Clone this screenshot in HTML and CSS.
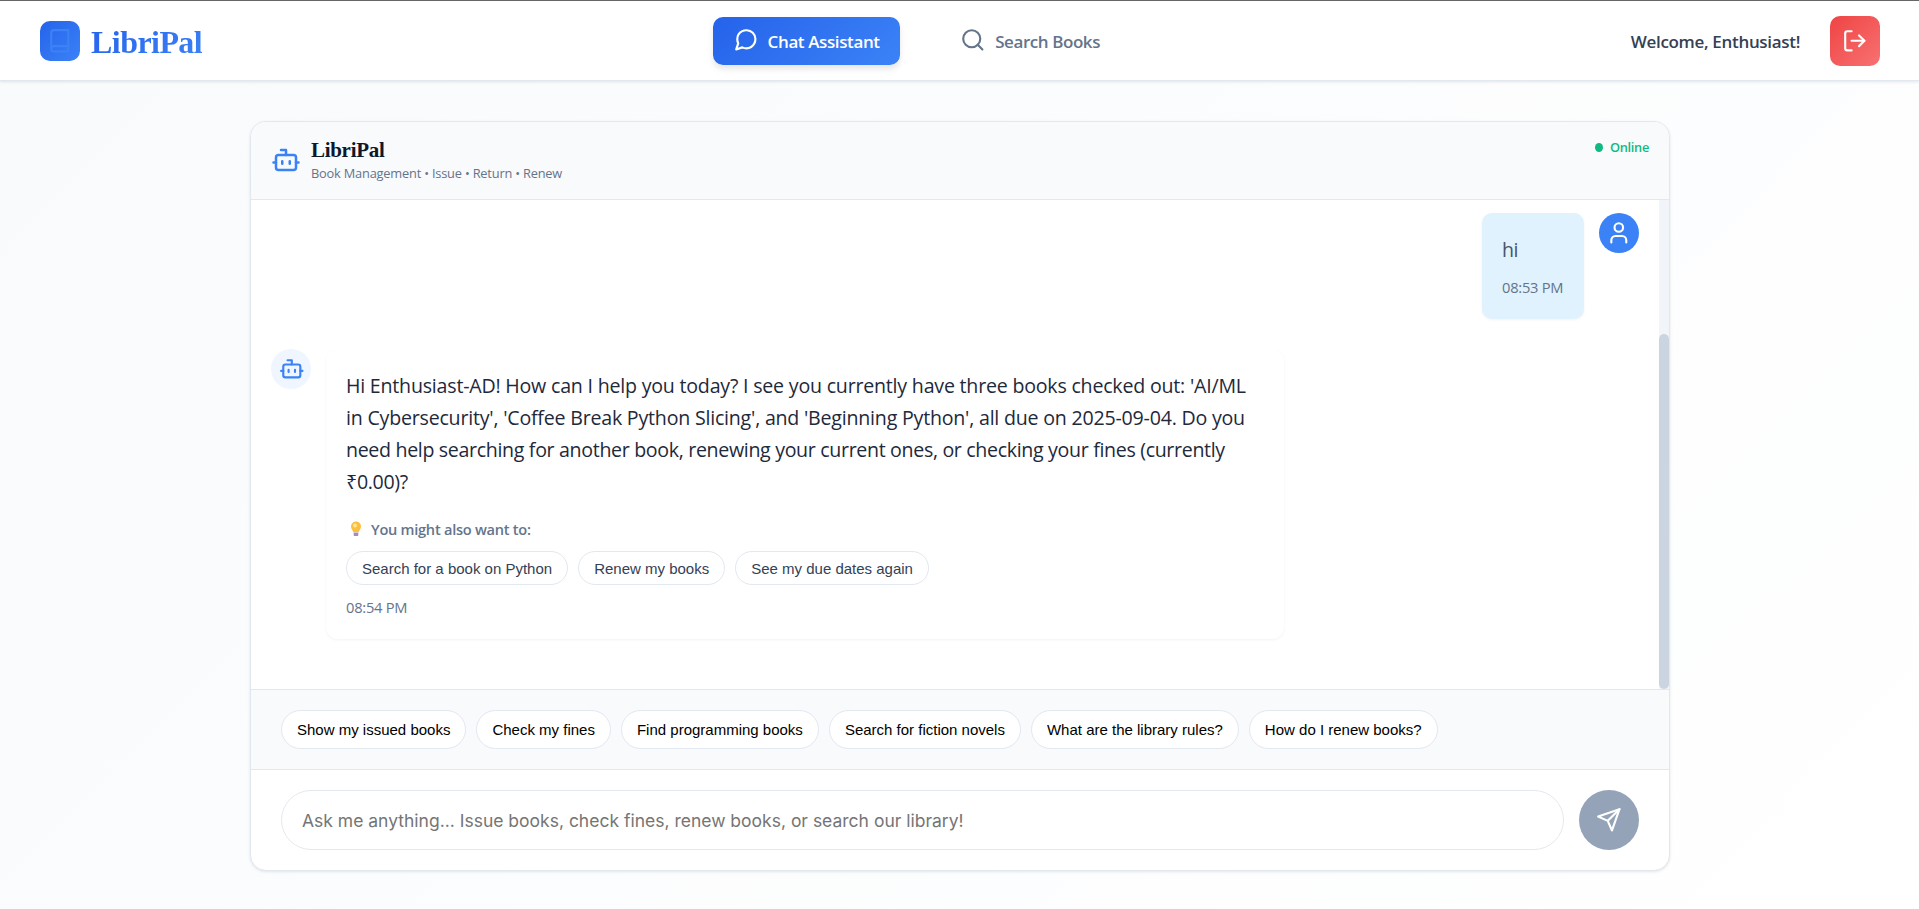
FILE: index.html
```html
<!DOCTYPE html>
<html lang="en">
<head>
<meta charset="utf-8">
<title>LibriPal</title>
<link rel="stylesheet" href="styles.css">
</head>
<body>
<header class="navbar">
  <div class="brand">
    <span class="brand-mark">
      <svg class="icon" viewBox="0 0 24 24"><path d="M4 19.500v-15A2.500 2.500 0 0 1 6.500 2H20v20H6.500a2.500 2.500 0 0 1 0-5H20"/></svg>
    </span>
    <span class="brand-name">LibriPal</span>
  </div>
  <nav class="tabs">
    <a class="tab tab-active">
      <svg class="icon" viewBox="0 0 24 24"><path d="M21 11.500a8.380 8.380 0 0 1-.9 3.800 8.500 8.500 0 0 1-7.600 4.700 8.380 8.380 0 0 1-3.800-.9L3 21l1.900-5.700a8.380 8.380 0 0 1-.9-3.800 8.500 8.500 0 0 1 4.700-7.600 8.380 8.380 0 0 1 3.800-.9h.5a8.480 8.480 0 0 1 8 8v.5z"/></svg>
      <span>Chat Assistant</span>
    </a>
    <a class="tab">
      <svg class="icon" viewBox="0 0 24 24"><circle cx="11" cy="11" r="8"/><path d="m21 21-4.350-4.350"/></svg>
      <span>Search Books</span>
    </a>
  </nav>
  <div class="account">
    <span class="welcome">Welcome, Enthusiast!</span>
    <button class="logout" aria-label="Log out">
      <svg class="icon" viewBox="0 0 24 24"><path d="M9 21H5a2 2 0 0 1-2-2V5a2 2 0 0 1 2-2h4"/><path d="m16 17 5-5-5-5"/><path d="M21 12H9"/></svg>
    </button>
  </div>
</header>

<main class="chat">
  <div class="chat-head">
    <svg class="icon bot-icon" viewBox="0 0 24 24"><path d="M12 8V4H8"/><rect width="16" height="12" x="4" y="8" rx="2"/><path d="M2 14h2M20 14h2M15 13v2M9 13v2"/></svg>
    <div class="chat-title">
      <h1>LibriPal</h1>
      <p>Book Management • Issue • Return • Renew</p>
    </div>
    <div class="status"><i class="status-dot"></i><span>Online</span></div>
  </div>

  <div class="messages">
    <div class="message-list">
      <div class="message message-user">
        <div class="bubble bubble-user">
          <p class="text text-user">hi</p>
          <time class="time">08:53 PM</time>
        </div>
        <span class="avatar avatar-user">
          <svg class="icon" viewBox="0 0 24 24"><path d="M19 21v-2a4 4 0 0 0-4-4H9a4 4 0 0 0-4 4v2"/><circle cx="12" cy="7" r="4"/></svg>
        </span>
      </div>
      <div class="message">
        <span class="avatar avatar-bot">
          <svg class="icon" viewBox="0 0 24 24"><path d="M12 8V4H8"/><rect width="16" height="12" x="4" y="8" rx="2"/><path d="M2 14h2M20 14h2M15 13v2M9 13v2"/></svg>
        </span>
        <div class="bubble bubble-bot">
          <p class="text">Hi Enthusiast-AD! How can I help you today? I see you currently have three books checked out: 'AI/ML<br>in Cybersecurity', 'Coffee Break Python Slicing', and 'Beginning Python', all due on 2025-09-04. Do you<br><span class="tight">need help searching for another book, renewing your current ones, or checking your fines (currently<br>₹0.00)?</span></p>
          <div class="hint">
            <svg class="bulb" width="20" height="18" viewBox="0 0 20 18"><path d="M10 1.500a5 5 0 0 0-5 5c0 2 1.400 3.200 2.300 5.500h5.400c.9-2.300 2.300-3.500 2.300-5.500a5 5 0 0 0-5-5Z" fill="#fcbf3c"/><circle cx="9" cy="5.500" r="2" fill="#ffe69a"/><path d="M7.500 12.500h5l-.4 3.500h-4.200Z" fill="#a98bb5"/></svg>
            <span>You might also want to:</span>
          </div>
          <div class="chips">
            <button class="chip">Search for a book on Python</button>
            <button class="chip">Renew my books</button>
            <button class="chip">See my due dates again</button>
          </div>
          <time class="time">08:54 PM</time>
        </div>
      </div>
    </div>
    <div class="scroll-track"><div class="scroll-thumb"></div></div>
  </div>

  <div class="quick">
    <button class="quick-chip">Show my issued books</button>
    <button class="quick-chip">Check my fines</button>
    <button class="quick-chip">Find programming books</button>
    <button class="quick-chip">Search for fiction novels</button>
    <button class="quick-chip">What are the library rules?</button>
    <button class="quick-chip">How do I renew books?</button>
  </div>

  <div class="composer">
    <div class="field">Ask me anything... Issue books, check fines, renew books, or search our library!</div>
    <button class="send" aria-label="Send">
      <svg class="icon" viewBox="0 0 24 24"><path d="m22 2-7 20-4-9-9-4Z"/><path d="M22 2 11 13"/></svg>
    </button>
  </div>
</main>
</body>
</html>
```
FILE: styles.css
```css
* { box-sizing: border-box; }

body {
  margin: 0;
  height: 909px;
  overflow: hidden;
  display: flex;
  flex-direction: column;
  font-family: "Open Sans", "Noto Sans", sans-serif;
  color: #1e293b;
  background: linear-gradient(135deg, #f8fafc 0%, #ffffff 100%);
}

button { border: 0; margin: 0; padding: 0; background: none; color: inherit; }
h1, p { margin: 0; }

.icon { width: 25.6px; height: 25.6px; fill: none; stroke: currentColor; stroke-width: 2; stroke-linecap: round; stroke-linejoin: round; flex: none; }

.navbar {
  flex: none;
  height: 81px;
  border-top: 1px solid #666;
  border-bottom: 1px solid #e2e8f0;
  box-shadow: 0 1px 3px rgba(0, 0, 0, .1);
  background: #fff;
  display: grid;
  grid-template-columns: 673px 1fr auto;
  align-items: center;
  padding: 0 39px 0 40px;
}
.brand { display: flex; align-items: center; gap: 11px; padding-top: 1px; }
.brand-mark {
  width: 40px; height: 40px; border-radius: 10px;
  background: linear-gradient(135deg, #2563eb, #3b82f6);
  color: #3b82f6;
  display: flex; align-items: center; justify-content: center;
}
.brand-name {
  font: 700 32px/40px "Liberation Serif", serif;
  letter-spacing: -.55px;
  padding-top: 1px;
  background: linear-gradient(135deg, #2563eb, #3b82f6);
  -webkit-background-clip: text; background-clip: text;
  color: transparent;
}
.tabs { display: flex; gap: 40px; }
.tab {
  height: 48px; display: flex; align-items: center; gap: 9.600px;
  padding: 1px 20px 0; border-radius: 10px;
  font-size: 17px; font-weight: 600; letter-spacing: -.43px; color: #64748b; white-space: nowrap;
}
.tab .icon { margin-top: -2px; }
.tab-active {
  width: 187px;
  gap: 9px;
  letter-spacing: -.39px;
  color: #fff;
  background: linear-gradient(135deg, #2563eb, #3b82f6);
  box-shadow: 0 4px 6px rgba(0, 0, 0, .1);
}
.account { display: flex; align-items: center; gap: 30px; }
.welcome { font-size: 17px; font-weight: 600; letter-spacing: -.32px; color: #334155; white-space: nowrap; padding-top: 1px; }
.logout {
  width: 50px; height: 50px; border-radius: 10px; color: #fff;
  background: linear-gradient(135deg, #ef4444, #f87171);
  display: flex; align-items: center; justify-content: center;
}

.chat {
  flex: none;
  width: 1420px; height: 750px;
  margin: 40px 0 0 250px;
  border: 1px solid #e2e8f0; border-radius: 16px;
  background: #fff; overflow: hidden;
  box-shadow: 0 1px 3px rgba(0, 0, 0, .1);
  display: flex; flex-direction: column;
}
.chat-head {
  height: 78px; flex: none;
  padding: 14px 20px 0;
  display: flex; align-items: flex-start; gap: 10px;
  background: #f8fafc; border-bottom: 1px solid #e2e8f0;
}
.bot-icon { width: 30px; height: 30px; color: #3b82f6; margin-top: 9px; }
.chat-title h1 { font: 700 21px/29px "Liberation Serif", serif; letter-spacing: -.3px; color: #0f172a; }
.chat-title p { font-size: 12.800px; line-height: 16px; letter-spacing: -.19px; color: #64748b; }
.status { margin-left: auto; display: flex; align-items: center; gap: 7px; color: #10b981; font-size: 12.800px; line-height: 22px; font-weight: 600; letter-spacing: -.3px; }
.status-dot { width: 8px; height: 9px; border-radius: 50%; background: #10b981; }

.messages { height: 489px; flex: none; display: flex; }
.message-list { flex: 1; padding: 13px 20px 0; display: flex; flex-direction: column; gap: 30px; }
.scroll-track { width: 10px; background: #f1f5f9; padding-top: 134px; }
.scroll-thumb { height: 355px; border-radius: 5px; background: #cbd5e1; }
.message { display: flex; align-items: flex-start; gap: 15px; }
.message-user { justify-content: flex-end; }
.avatar { width: 40px; height: 40px; flex: none; border-radius: 50%; display: flex; align-items: center; justify-content: center; }
.avatar-user { background: #3b82f6; color: #fff; }
.avatar-bot { background: #eff6ff; color: #3b82f6; padding-left: 1px; }
.bubble { border-radius: 12px; box-shadow: 0 1px 3px rgba(0, 0, 0, .05); }
.bubble-user { width: 102px; height: 106px; padding: 21px 0 0 20px; background: #e0f2fe; border-radius: 10px; }
.bubble-bot { width: 958px; height: 290px; padding: 21px 0 0 20px; background: #fff; }
.text { font-size: 19.600px; line-height: 32px; letter-spacing: -.21px; white-space: nowrap; }
.text .tight { letter-spacing: -.33px; }
.text-user { color: #475569; letter-spacing: -.5px; }
.time { display: block; font-size: 14.700px; line-height: 22px; letter-spacing: -.25px; color: #64748b; }
.bubble-user .time { margin-top: 10px; }
.hint { display: flex; align-items: center; gap: 5px; height: 24px; margin-top: 19px; font-size: 14.600px; font-weight: 600; letter-spacing: -.26px; color: #64748b; }
.chips { display: flex; gap: 10px; margin: 10px 0 11px; }
.chip { height: 34px; padding: 0 15px; border: 1px solid #e2e8f0; border-radius: 20px; background: #fff; color: #334155; font: 15px "Liberation Sans", sans-serif; white-space: nowrap; }

.quick { height: 81px; flex: none; display: flex; align-items: center; gap: 10px; padding: 0 30px; background: #f8fafc; border-top: 1px solid #e2e8f0; border-bottom: 1px solid #e2e8f0; }
.quick-chip { height: 39px; padding: 0 15px; border: 1px solid #e2e8f0; border-radius: 20px; background: #fff; color: #000; font: 15px "Liberation Sans", sans-serif; white-space: nowrap; }

.composer { flex: 1; display: flex; align-items: center; gap: 15px; padding: 0 30px; }
.field { flex: 1; height: 60px; border: 1px solid #e2e8f0; border-radius: 30px; padding: 1px 20px 0; font: 17.500px/58px Inter, sans-serif; color: #757575; white-space: nowrap; }
.send { width: 60px; height: 60px; border-radius: 50%; background: #94a3b8; color: #fff; display: flex; align-items: center; justify-content: center; }
```
